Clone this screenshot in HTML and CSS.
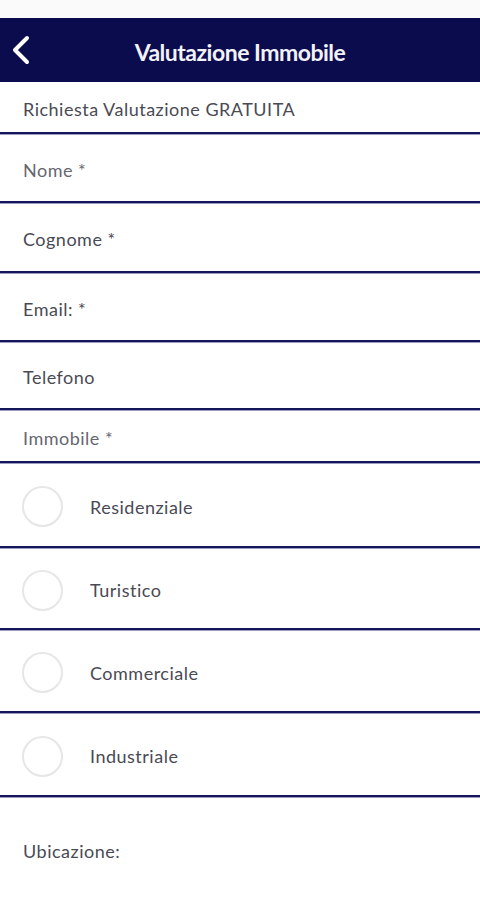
FILE: index.html
```html
<!DOCTYPE html>
<html lang="it">
<head>
<meta charset="utf-8">
<title>Valutazione Immobile</title>
<link rel="stylesheet" href="styles.css">
</head>
<body>
<div class="status"></div>
<header class="appbar">
  <button class="back" aria-label="Indietro">
    <svg width="22" height="30" viewBox="0 0 22 30"><path d="M17 3 L5 15 L17 27" fill="none" stroke="#fff" stroke-width="4" stroke-linecap="round" stroke-linejoin="round"/></svg>
  </button>
  <h1 class="title">Valutazione Immobile</h1>
</header>
<main class="form">
  <div class="row intro"><span class="label">Richiesta Valutazione GRATUITA</span></div>
  <div class="row field h69"><span class="label light">Nome *</span></div>
  <div class="row field h70"><span class="label">Cognome *</span></div>
  <div class="row field h69"><span class="label">Email: *</span></div>
  <div class="row field h68"><span class="label">Telefono</span></div>
  <div class="row section"><span class="label light">Immobile *</span></div>
  <label class="row radio h85"><span class="circle"></span><span class="label">Residenziale</span></label>
  <label class="row radio h82"><span class="circle"></span><span class="label">Turistico</span></label>
  <label class="row radio h83"><span class="circle"></span><span class="label">Commerciale</span></label>
  <label class="row radio h84"><span class="circle"></span><span class="label">Industriale</span></label>
  <div class="row last"><span class="label">Ubicazione:</span></div>
</main>
</body>
</html>
```
FILE: styles.css
```css
* { box-sizing: border-box; }
html, body { margin: 0; padding: 0; background: #fff; }
body {
  width: 480px;
  height: 900px;
  overflow: hidden;
  font-family: Lato, "Open Sans", sans-serif;
  color: #4a4a55;
}
.status { height: 18px; background: #fafafa; }
.appbar {
  height: 64px;
  background: #0b0c4e;
  display: flex;
  align-items: center;
}
.back {
  background: none;
  border: 0;
  padding: 0;
  margin-left: 10px;
  width: 22px;
  height: 30px;
  display: flex;
}
.title {
  flex: 1;
  margin: 3px 0 0 -32px;
  text-align: center;
  color: #f2f2f8;
  font-size: 23px;
  font-weight: 700;
  letter-spacing: -0.5px;
}
.form { display: flex; flex-direction: column; }
.row {
  display: flex;
  align-items: center;
  padding-left: 23px;
  padding-top: 4px;
  border-bottom: 2px solid #15155a;
  box-shadow: 0 1px 0 #9a9ac4;
}
.label { font-size: 18px; letter-spacing: 0.5px; }
.light { color: #666670; }
.intro { height: 52px; }
.section { height: 53px; }
.h68 { height: 68px; }
.h69 { height: 69px; }
.h70 { height: 70px; }
.radio { padding-left: 22px; padding-top: 4px; }
.h82 { height: 82px; }
.h83 { height: 83px; }
.h84 { height: 84px; }
.h85 { height: 85px; }
.circle {
  width: 41px;
  height: 41px;
  border-radius: 50%;
  border: 2px solid #e6e6e6;
  margin-right: 27px;
}
.last {
  height: 104px;
  border-bottom: 0;
  box-shadow: none;
  padding-top: 4px;
}
```
